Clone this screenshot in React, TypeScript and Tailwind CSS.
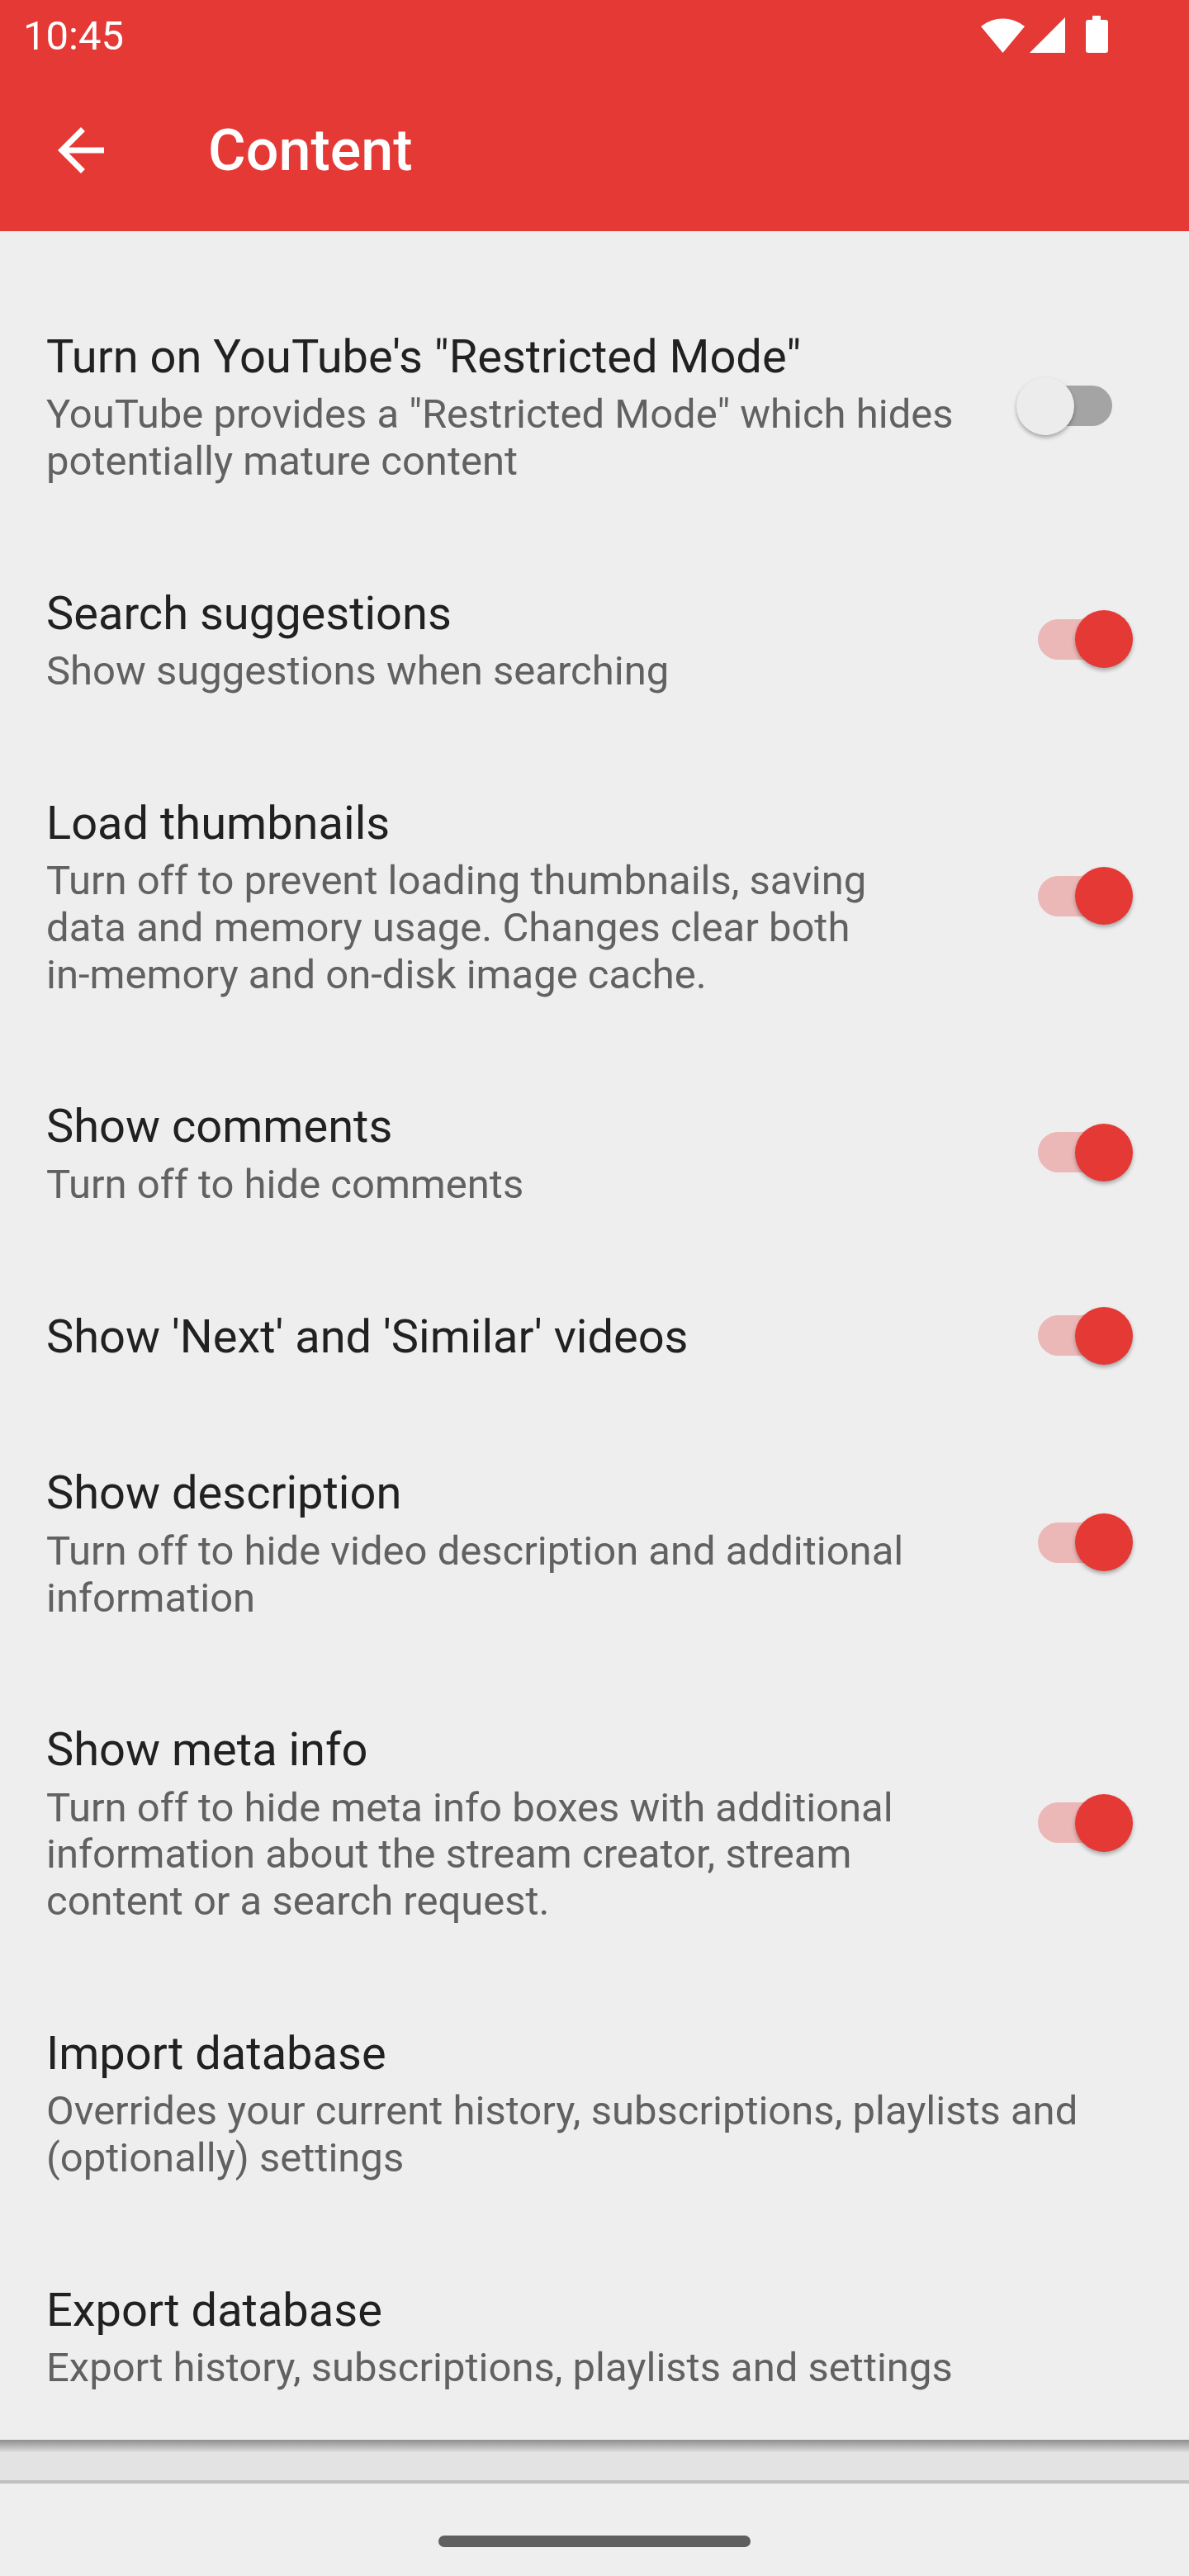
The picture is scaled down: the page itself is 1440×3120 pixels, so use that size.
import React from 'react';

type Pref = {
  title: string;
  summary: string[];
  toggle?: 'on' | 'off';
};

const prefs: Pref[] = [
  {
    title: 'Turn on YouTube\'s "Restricted Mode"',
    summary: ['YouTube provides a "Restricted Mode" which hides', 'potentially mature content'],
    toggle: 'off',
  },
  { title: 'Search suggestions', summary: ['Show suggestions when searching'], toggle: 'on' },
  {
    title: 'Load thumbnails',
    summary: [
      'Turn off to prevent loading thumbnails, saving',
      'data and memory usage. Changes clear both',
      'in-memory and on-disk image cache.',
    ],
    toggle: 'on',
  },
  { title: 'Show comments', summary: ['Turn off to hide comments'], toggle: 'on' },
  { title: "Show 'Next' and 'Similar' videos", summary: [], toggle: 'on' },
  {
    title: 'Show description',
    summary: ['Turn off to hide video description and additional', 'information'],
    toggle: 'on',
  },
  {
    title: 'Show meta info',
    summary: [
      'Turn off to hide meta info boxes with additional',
      'information about the stream creator, stream',
      'content or a search request.',
    ],
    toggle: 'on',
  },
  {
    title: 'Import database',
    summary: ['Overrides your current history, subscriptions, playlists and', '(optionally) settings'],
  },
  { title: 'Export database', summary: ['Export history, subscriptions, playlists and settings'] },
];

const Toggle: React.FC<{ on: boolean }> = ({ on }) => (
  <div className="relative w-[141px] h-[70px] mb-[4px] shrink-0 flex items-center justify-center">
    <div className={`w-[90px] h-[49px] rounded-full ${on ? 'bg-[#ebb8b7]' : 'bg-[#a4a4a4]'}`} />
    <div
      className={`absolute top-0 w-[70px] h-[70px] rounded-full shadow-[0_3px_5px_rgba(0,0,0,0.3)] ${
        on ? 'right-0 bg-[#e53935]' : 'left-0 bg-[#ececec]'
      }`}
    />
  </div>
);

const StatusIcons = () => (
  <div className="flex items-end gap-[6px] pr-[98px]">
    <svg width="53" height="44" viewBox="0 0 53 44">
      <path d="M26.5 44 L0 12 A41.5 41.5 0 0 1 53 12 Z" fill="#fff" />
    </svg>
    <svg width="43" height="43" viewBox="0 0 43 43">
      <path d="M0 43 L43 43 L43 0 Z" fill="#fff" />
    </svg>
    <svg width="27" height="45" viewBox="0 0 27 45" className="ml-[19px]">
      <rect x="8" y="0" width="10" height="7" rx="1" fill="#fff" />
      <rect x="0" y="5" width="27" height="40" rx="3" fill="#fff" />
    </svg>
  </div>
);

export default function App() {
  return (
    <div className="h-[3120px] w-[1440px] flex flex-col bg-[#eeeeee] overflow-hidden font-['Roboto',sans-serif]">
      {/* app bar */}
      <header className="bg-[#e53935] h-[280px] shrink-0 flex flex-col">
        <div className="h-[84px] flex items-start justify-between">
          <span className="pl-[28px] pt-[15px] text-[49px] leading-[57px] text-white">10:45</span>
          <div className="pt-[19px]">
            <StatusIcons />
          </div>
        </div>
        <div className="h-[196px] flex items-center">
          <div className="ml-[56px] w-[84px] h-[84px] flex items-center justify-center">
            <svg width="84" height="84" viewBox="0 0 24 24">
              <path
                d="M20 11H7.83l5.59-5.59L12 4l-8 8 8 8 1.41-1.41L7.83 13H20v-2z"
                fill="#fff"
              />
            </svg>
          </div>
          <h1 className="ml-[112px] text-[70px] leading-[82px] font-medium text-white">Content</h1>
        </div>
      </header>

      {/* preference list */}
      <main className="flex-1 overflow-hidden pt-[58.5px]">
        {prefs.map((p) => (
          <div
            key={p.title}
            className={`flex items-center pl-[56px] pr-[68px] ${
              p.summary.length > 0 ? 'py-[61.5px]' : 'py-[58px]'
            }`}
          >
            <div className="flex-1 min-w-0">
              <div className="text-[56px] leading-[65.6px] text-[#212121] whitespace-nowrap">{p.title}</div>
              {p.summary.length > 0 && (
                <div className="mt-[8.8px] text-[49px] leading-[56.7px] text-[#616161]">
                  {p.summary.map((line) => (
                    <span key={line} className="block whitespace-nowrap">
                      {line}
                    </span>
                  ))}
                </div>
              )}
            </div>
            {p.toggle && <Toggle on={p.toggle === 'on'} />}
          </div>
        ))}
      </main>

      {/* bottom panel + nav */}
      <div className="shrink-0">
        <div className="h-[15px] bg-gradient-to-b from-[#8e8e8e] to-[#dedede]" />
        <div className="h-[34px] bg-[#e3e3e3]" />
        <div className="h-[4px] bg-[#c0c0c0]" />
        <div className="h-[112px] bg-[#eeeeee] flex justify-center pt-[63px]">
          <div className="w-[378px] h-[14px] rounded-full bg-[#5f5f5f]" />
        </div>
      </div>
    </div>
  );
}
